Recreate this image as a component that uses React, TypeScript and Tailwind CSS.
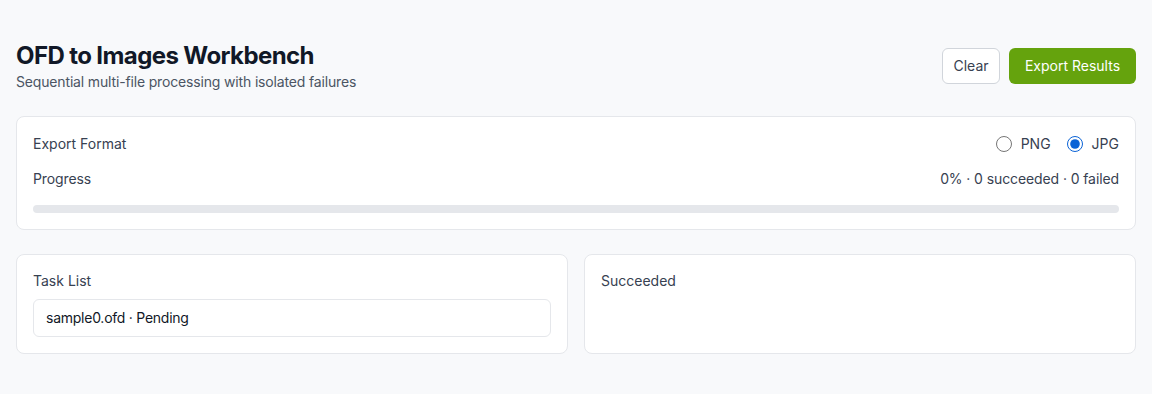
import React from "react";

export default function App() {
  return (
    <div className="min-h-[394px] bg-[#f8f9fb] px-4 pt-10 pb-10" style={{ fontFamily: "Inter, 'Noto Sans', sans-serif" }}>
      <div className="flex items-center justify-between">
        <div>
          <h1 className="text-2xl font-bold leading-8 tracking-[-0.6px] text-[#111827]">OFD to Images Workbench</h1>
          <p className="text-sm leading-5 tracking-[-0.16px] text-[#4b5563]">Sequential multi-file processing with isolated failures</p>
        </div>
        <div className="flex items-center gap-[9px]">
          <button className="h-9 w-[58px] rounded-md border border-[#d1d5db] bg-white text-sm text-[#374151]">Clear</button>
          <button className="h-9 w-[127px] rounded-md bg-[#65a30d] text-sm text-white">Export Results</button>
        </div>
      </div>

      <div className="mt-6 rounded-lg border border-[#e5e7eb] bg-white p-4">
        <div className="flex h-[22px] items-center justify-between text-sm text-[#374151]">
          <span>Export Format</span>
          <div className="flex items-center gap-4">
            <label className="flex items-center gap-[9px]">
              <input type="radio" name="fmt" className="m-0 h-4 w-4 accent-[#0b63d6]" />
              <span>PNG</span>
            </label>
            <label className="flex items-center gap-[9px]">
              <input type="radio" name="fmt" defaultChecked className="m-0 h-4 w-4 accent-[#0b63d6]" />
              <span>JPG</span>
            </label>
          </div>
        </div>
        <div className="mt-[14px] flex items-center justify-between text-sm leading-5 tracking-[-0.1px] text-[#374151]">
          <span>Progress</span>
          <span>0% · 0 succeeded · 0 failed</span>
        </div>
        <div className="mt-4 h-2 w-full rounded-full bg-[#e5e7eb]">
          <div className="h-2 rounded-full bg-[#65a30d]" style={{ width: "0%" }} />
        </div>
      </div>

      <div className="mt-6 grid grid-cols-2 gap-4">
        <div className="rounded-lg border border-[#e5e7eb] bg-white p-4">
          <div className="text-sm leading-5 text-[#374151]">Task List</div>
          <div className="mt-2 rounded-md border border-[#e5e7eb] px-3 py-2 text-sm leading-5 tracking-[-0.25px] text-[#111827]">
            sample0.ofd · Pending
          </div>
        </div>
        <div className="rounded-lg border border-[#e5e7eb] bg-white p-4">
          <div className="text-sm leading-5 text-[#374151]">Succeeded</div>
        </div>
      </div>
    </div>
  );
}
